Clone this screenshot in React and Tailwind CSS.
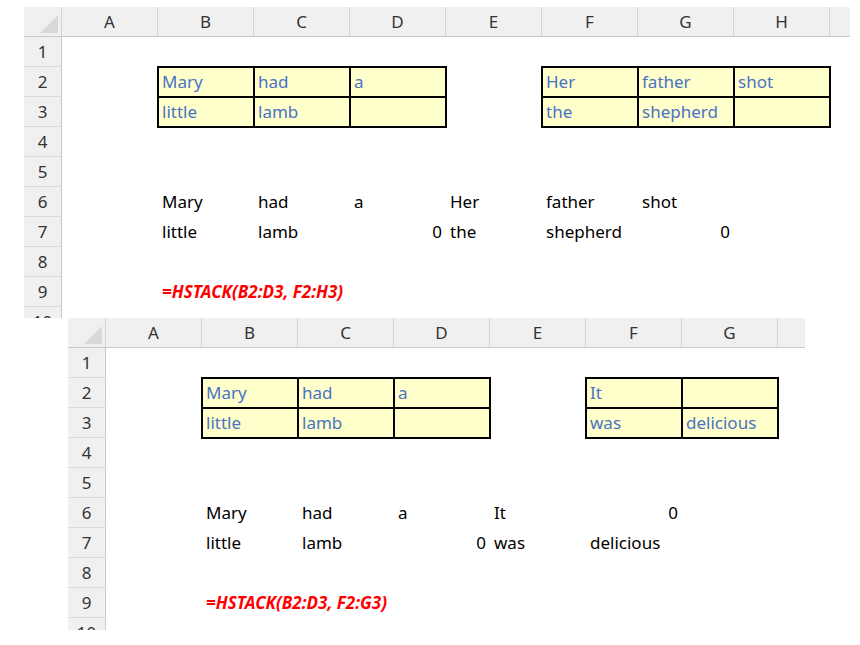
import React from "react";

const LETTERS = ["A", "B", "C", "D", "E", "F", "G", "H"];

function Cell({ v }) {
  if (!v) return <div className="h-[30px]" />;
  const yellow = v.box;
  const color = v.red ? "text-[#ff0000] font-bold italic " : yellow ? "text-[#4a72c4] " : "text-black ";
  return (
    <div
      className={
        "h-[30px] flex items-center px-[4px] whitespace-nowrap overflow-visible " +
        (v.right ? "justify-end " : "") +
        (yellow ? "bg-[#ffffcc] outline-2 outline-black -outline-offset-1 " : "") +
        color
      }
    >
      {v.t}
    </div>
  );
}

function Sheet({ ncols, data, width, height }) {
  const rows = [1, 2, 3, 4, 5, 6, 7, 8, 9, 10];
  return (
    <div
      className="bg-white overflow-hidden font-['Liberation_Sans',sans-serif] text-[17px]"
      style={{ width, height }}
    >
      <div className="flex h-[30px] bg-[#f0f0f0] border-b border-[#c8c8c8]">
        <div className="w-[38px] shrink-0 flex items-end justify-end p-[3px] border-r border-[#d4d4d4]">
          <div className="w-0 h-0 border-l-[18px] border-l-transparent border-b-[18px] border-b-[#d8d8d8]" />
        </div>
        {LETTERS.slice(0, ncols).map((l) => (
          <div key={l} className="w-[96px] shrink-0 flex items-center justify-center text-[#333] border-r border-[#d4d4d4]">
            {l}
          </div>
        ))}
        <div className="flex-1" />
      </div>
      {rows.map((r) => (
        <div key={r} className="flex h-[30px]">
          <div className="w-[38px] shrink-0 bg-[#f0f0f0] border-r border-[#c8c8c8] border-b border-b-[#dadada] flex items-center justify-center text-[#333]">
            {r}
          </div>
          {LETTERS.slice(0, ncols).map((l) => (
            <div key={l} className="w-[96px] shrink-0">
              <Cell v={data[l + r]} />
            </div>
          ))}
        </div>
      ))}
    </div>
  );
}

const b = (t) => ({ t, box: true });
const p = (t) => ({ t });
const n = (t) => ({ t, right: true });

const top = {
  B2: b("Mary"), C2: b("had"), D2: b("a"),
  B3: b("little"), C3: b("lamb"), D3: b(""),
  F2: b("Her"), G2: b("father"), H2: b("shot"),
  F3: b("the"), G3: b("shepherd"), H3: b(""),
  B6: p("Mary"), C6: p("had"), D6: p("a"), E6: p("Her"), F6: p("father"), G6: p("shot"),
  B7: p("little"), C7: p("lamb"), D7: n("0"), E7: p("the"), F7: p("shepherd"), G7: n("0"),
  B9: { t: "=HSTACK(B2:D3, F2:H3)", red: true },
};

const bottom = {
  B2: b("Mary"), C2: b("had"), D2: b("a"),
  B3: b("little"), C3: b("lamb"), D3: b(""),
  F2: b("It"), G2: b(""),
  F3: b("was"), G3: b("delicious"),
  B6: p("Mary"), C6: p("had"), D6: p("a"), E6: p("It"), F6: n("0"),
  B7: p("little"), C7: p("lamb"), D7: n("0"), E7: p("was"), F7: p("delicious"),
  B9: { t: "=HSTACK(B2:D3, F2:G3)", red: true },
};

export default function App() {
  return (
    <div className="relative w-[860px] h-[645px] bg-white overflow-hidden">
      <div className="absolute left-[24px] top-[7px]">
        <Sheet ncols={8} data={top} width={826} height={311} />
      </div>
      <div className="absolute left-[68px] top-[318px]">
        <Sheet ncols={7} data={bottom} width={737} height={312} />
      </div>
    </div>
  );
}
